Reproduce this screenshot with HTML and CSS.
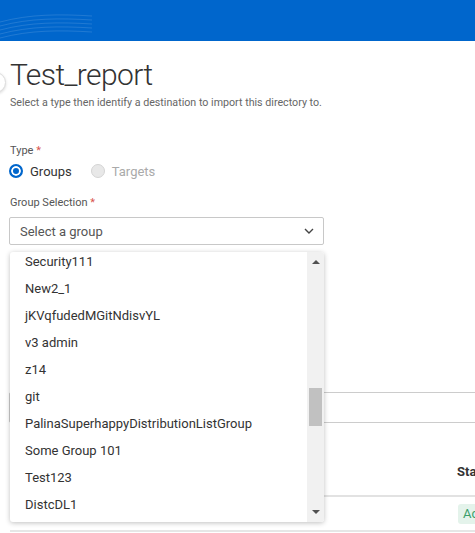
FILE: index.html
```html
<!DOCTYPE html>
<html lang="en">
<head>
    <meta charset="UTF-8">
    <meta name="viewport" content="width=device-width, initial-scale=1.0">
    <title>Test_report</title>
    <link rel="stylesheet" href="styles.css">
</head>
<body>
    <header class="top-bar">
        <svg class="waves" width="100" height="41" viewBox="0 0 100 41">
            <path d="M0 22 C30 14 60 14 92 16" />
            <path d="M0 26 C30 18 60 18 92 20" />
            <path d="M0 30 C30 22 60 22 92 24" />
            <path d="M0 34 C30 26 60 26 92 28" />
            <path d="M0 38 C30 30 60 30 92 32" />
        </svg>
    </header>

    <span class="side-toggle"></span>

    <main class="page">
        <h1 class="page-title">Test_report</h1>
        <p class="page-subtitle">Select a type then identify a destination to import this directory to.</p>

        <div class="field">
            <div class="field-label">Type <span class="required">*</span></div>
            <div class="radio-row">
                <label class="radio-option">
                    <span class="radio checked"></span>
                    <span>Groups</span>
                </label>
                <label class="radio-option disabled">
                    <span class="radio"></span>
                    <span>Targets</span>
                </label>
            </div>
        </div>

        <div class="field group-field">
            <div class="field-label">Group Selection <span class="required">*</span></div>
            <div class="select-wrap">
                <div class="select-box">
                    <span>Select a group</span>
                    <svg class="chevron" width="10" height="6" viewBox="0 0 10 6">
                        <path d="M1 1 L5 5 L9 1" />
                    </svg>
                </div>

                <div class="dropdown">
                    <ul class="dropdown-list">
                        <li>Security111</li>
                        <li>New2_1</li>
                        <li>jKVqfudedMGitNdisvYL</li>
                        <li>v3 admin</li>
                        <li>z14</li>
                        <li>git</li>
                        <li>PalinaSuperhappyDistributionListGroup</li>
                        <li>Some Group 101</li>
                        <li>Test123</li>
                        <li>DistcDL1</li>
                    </ul>
                    <div class="scrollbar">
                        <span class="arrow-up"></span>
                        <div class="track">
                            <span class="thumb"></span>
                        </div>
                        <span class="arrow-down"></span>
                    </div>
                </div>
            </div>
        </div>

        <div class="field search-field">
            <input type="text" class="text-input">
        </div>

        <table class="results-table">
            <thead>
                <tr>
                    <th class="col-name"></th>
                    <th>Status</th>
                </tr>
            </thead>
            <tbody>
                <tr>
                    <td class="col-name"></td>
                    <td><span class="badge">Active</span></td>
                </tr>
            </tbody>
        </table>
    </main>
</body>
</html>
```

FILE: styles.css
```css
* {
    margin: 0;
    padding: 0;
    box-sizing: border-box;
}

body {
    font-family: Roboto, "Liberation Sans", Arial, sans-serif;
    color: #333;
    background: white;
    overflow: hidden;
    width: 475px;
    height: 533px;
    position: relative;
}

.top-bar {
    height: 41px;
    background: #0066cc;
    position: relative;
}

.waves {
    display: block;
}

.waves path {
    fill: none;
    stroke: rgba(255, 255, 255, 0.13);
    stroke-width: 1;
}

.side-toggle {
    position: absolute;
    left: -15px;
    top: 72px;
    width: 21px;
    height: 21px;
    border-radius: 50%;
    background: white;
    border: 1px solid #ddd;
    box-shadow: 0 1px 3px rgba(0, 0, 0, 0.15);
}

.page {
    padding: 0 10px;
    width: 760px;
}

.page-title {
    font-size: 30px;
    font-weight: 300;
    line-height: 37px;
    letter-spacing: -0.6px;
    color: #333;
    margin-top: 15px;
}

.page-subtitle {
    font-size: 10.7px;
    line-height: 14px;
    color: #666;
    margin-top: 3px;
}

.field {
    margin-top: 34px;
}

.field-label {
    font-size: 11px;
    line-height: 14px;
    color: #555;
}

.required {
    color: #d9534f;
}

.radio-row {
    display: flex;
    gap: 20px;
    margin-top: 5px;
    height: 16px;
    align-items: center;
}

.radio-option {
    display: flex;
    align-items: center;
    gap: 7px;
    font-size: 13px;
    color: #333;
}

.radio-option.disabled {
    color: #aaa;
}

.radio {
    width: 14px;
    height: 14px;
    border-radius: 50%;
    border: 1px solid #d4d4d4;
    background: #e8e8e8;
    margin-left: -1px;
}

.radio.checked {
    border: 2px solid #0066cc;
    background: #0066cc;
    box-shadow: inset 0 0 0 2px white;
}

.group-field {
    margin-top: 17px;
}

.select-wrap {
    position: relative;
    width: 315px;
    margin-top: 7px;
    margin-left: -1px;
}

.select-box {
    height: 28px;
    border: 1px solid #c8c8c8;
    border-radius: 2px;
    display: flex;
    align-items: center;
    justify-content: space-between;
    padding: 0 9px 0 10px;
    font-size: 13px;
    color: #555;
}

.chevron path {
    fill: none;
    stroke: #444;
    stroke-width: 1.4;
}

.dropdown {
    position: absolute;
    top: 35px;
    left: 1px;
    width: 314px;
    height: 270px;
    background: white;
    border-radius: 3px;
    box-shadow: 0 1px 5px rgba(0, 0, 0, 0.25);
    display: flex;
    overflow: hidden;
    z-index: 10;
}

.dropdown-list {
    list-style: none;
    flex: 1;
    margin-top: -4px;
}

.dropdown-list li {
    height: 27px;
    line-height: 27px;
    padding-left: 15px;
    font-size: 13px;
    color: #333;
    white-space: nowrap;
}

.scrollbar {
    width: 17px;
    background: #f1f1f1;
    display: flex;
    flex-direction: column;
    align-items: center;
}

.arrow-up,
.arrow-down {
    width: 0;
    height: 0;
    border-left: 4px solid transparent;
    border-right: 4px solid transparent;
    flex-shrink: 0;
}

.arrow-up {
    border-bottom: 4px solid #505050;
    margin: 8px 0 5px;
}

.arrow-down {
    border-top: 4px solid #505050;
    margin: 5px 0 8px;
}

.track {
    flex: 1;
    width: 100%;
    position: relative;
}

.thumb {
    position: absolute;
    left: 2px;
    right: 2px;
    top: 119px;
    height: 38px;
    background: #c1c1c1;
}

.search-field {
    margin-top: 147px;
}

.text-input {
    display: block;
    width: 100%;
    height: 31px;
    border: 1px solid #ccc;
    border-radius: 2px;
    margin-left: -1px;
}

.results-table {
    width: 100%;
    border-collapse: collapse;
    margin-top: 23px;
    font-size: 13px;
}

.results-table th {
    text-align: left;
    font-weight: 700;
    height: 50px;
    vertical-align: bottom;
    padding-bottom: 16px;
    border-bottom: 2px solid #e2e2e2;
    color: #333;
}

.results-table td {
    height: 35px;
    border-bottom: 2px solid #e6e6e6;
}

.col-name {
    width: 447px;
    padding-left: 15px;
}

.badge {
    display: inline-block;
    margin-left: 1px;
    padding: 0 5px;
    height: 20px;
    line-height: 20px;
    background: #e4f3eb;
    color: #3b9f6c;
    border-radius: 3px;
}
```
